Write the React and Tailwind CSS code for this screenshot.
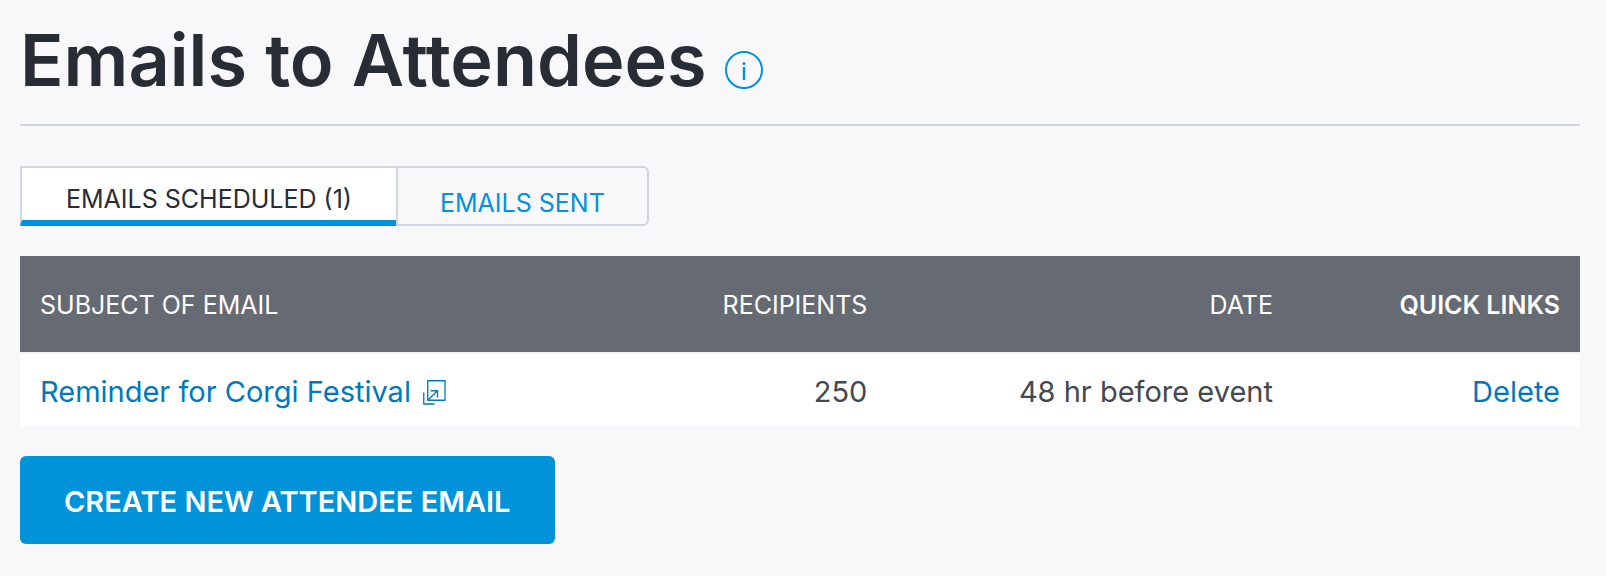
import { useState } from "react";

const EMAILS = [
  { id: 1, subject: "Reminder for Corgi Festival", recipients: 250, date: "48 hr before event" },
];

function InfoIcon() {
  return (
    <svg width="38" height="38" viewBox="0 0 38 38" fill="none" aria-hidden="true">
      <circle cx="19" cy="19" r="18" stroke="#0093da" strokeWidth="2" />
      <path d="M19 16V29" stroke="#0093da" strokeWidth="2.4" />
      <circle cx="19" cy="12.5" r="1.5" fill="#0093da" />
    </svg>
  );
}

function PopupIcon() {
  return (
    <svg width="23" height="25" viewBox="0 0 23 25" fill="none" stroke="currentColor" aria-hidden="true">
      <path d="M4.75 0.75H22V20.25H4.75Z" strokeWidth="1.3" />
      <path d="M0.75 12.5V24H11.5" strokeWidth="1.3" />
      <path d="M5 20L14.5 10.75M7.75 10.75H14.5V17.5" strokeWidth="1.3" />
    </svg>
  );
}

function Tabs({ active, onChange }) {
  const base = "h-[60px] text-[25px] leading-8 cursor-pointer border-2 border-[#d2d6df]";
  const on = "bg-white text-[#282c35] px-11 pt-2.5 border-b-6 border-b-[#0093da]";
  const off = "text-[#0093da] px-[42px] pt-3.5";
  return (
    <div className="flex" role="tablist">
      <button
        role="tab"
        aria-selected={active === "scheduled"}
        onClick={() => onChange("scheduled")}
        className={`${base} border-r-0 ${active === "scheduled" ? on : off}`}
      >
        EMAILS SCHEDULED ({EMAILS.length})
      </button>
      <button
        role="tab"
        aria-selected={active === "sent"}
        onClick={() => onChange("sent")}
        className={`${base} rounded-r-md ${active === "sent" ? on : off}`}
      >
        EMAILS SENT
      </button>
    </div>
  );
}

function EmailTable() {
  const cell = "px-5 pt-1 border-t-2 border-[#eef1f5]";
  return (
    <table className="w-full table-fixed border-separate border-spacing-0">
      <thead className="bg-[#666a73] text-white text-[25px] leading-8">
        <tr className="h-24">
          <th className="w-[40%] px-5 pt-0.5 text-left font-normal">SUBJECT OF EMAIL</th>
          <th className="px-5 pt-0.5 text-right font-normal">RECIPIENTS</th>
          <th className="w-[26%] px-5 pt-0.5 text-right font-normal">DATE</th>
          <th className="w-[18.4%] px-5 pt-0.5 text-right font-semibold">QUICK LINKS</th>
        </tr>
      </thead>
      <tbody className="bg-white text-[#45494e] text-[29px] leading-9">
        {EMAILS.map((email) => (
          <tr key={email.id} className="h-[74px]">
            <td className={cell}>
              <a href="#email" className="flex items-center gap-3 text-[#0079ba]">
                {email.subject}
                <PopupIcon />
              </a>
            </td>
            <td className={`${cell} text-right`}>{email.recipients}</td>
            <td className={`${cell} text-right`}>{email.date}</td>
            <td className={`${cell} text-right`}>
              <a href="#delete" className="text-[#0079ba]">Delete</a>
            </td>
          </tr>
        ))}
      </tbody>
    </table>
  );
}

export default function App() {
  const [tab, setTab] = useState("scheduled");

  return (
    <main className="min-h-screen bg-[#f8f8fa] pl-5 pr-[26px] pt-6 pb-8 font-['Inter',sans-serif]">
      <header className="flex items-end gap-[18px] border-b-2 border-[#d2d6df] pb-7">
        <h1 className="text-[72px] leading-[72px] font-semibold text-[#282c35]">Emails to Attendees</h1>
        <button aria-label="About attendee emails" className="mb-[7px] cursor-pointer">
          <InfoIcon />
        </button>
      </header>

      <div className="pt-10 pb-[30px]">
        <Tabs active={tab} onChange={setTab} />
      </div>

      <EmailTable />

      <button className="mt-[30px] h-22 px-11 pt-1 rounded-md bg-[#0093da] text-white text-[29px] leading-9 font-semibold cursor-pointer">
        CREATE NEW ATTENDEE EMAIL
      </button>
    </main>
  );
}
